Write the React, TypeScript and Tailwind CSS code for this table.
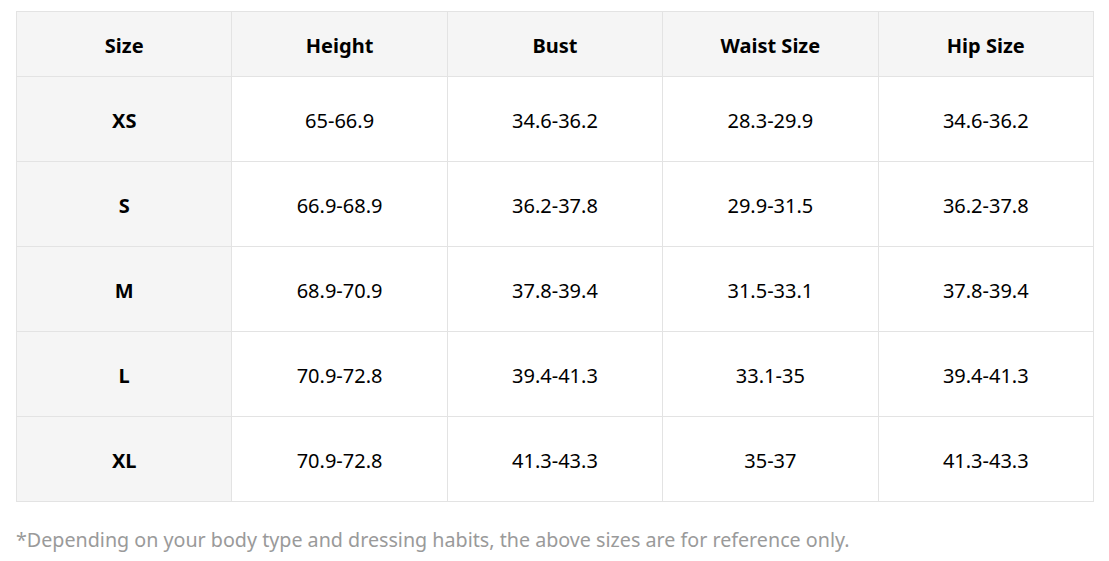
import React from "react";

const headers = ["Size", "Height", "Bust", "Waist Size", "Hip Size"];
const rows = [
  ["XS", "65-66.9", "34.6-36.2", "28.3-29.9", "34.6-36.2"],
  ["S", "66.9-68.9", "36.2-37.8", "29.9-31.5", "36.2-37.8"],
  ["M", "68.9-70.9", "37.8-39.4", "31.5-33.1", "37.8-39.4"],
  ["L", "70.9-72.8", "39.4-41.3", "33.1-35", "39.4-41.3"],
  ["XL", "70.9-72.8", "41.3-43.3", "35-37", "41.3-43.3"],
];

export default function App() {
  return (
    <div
      className="w-[1109px] h-[561px] bg-white pl-[16px] pt-[11px]"
      style={{ fontFamily: '"Noto Sans", "Open Sans", sans-serif' }}
    >
      <table className="w-[1078px] table-fixed border-collapse border border-[#e3e3e3] text-[20px] text-black">
        <thead>
          <tr className="h-[65px] bg-[#f5f5f5]">
            {headers.map((h) => (
              <th key={h} className="border border-[#e3e3e3] text-center font-bold p-0 pt-[3px] leading-[26px]">
                {h}
              </th>
            ))}
          </tr>
        </thead>
        <tbody>
          {rows.map((r) => (
            <tr key={r[0]} className="h-[85px]">
              {r.map((c, i) => (
                <td
                  key={i}
                  className={
                    "border border-[#e3e3e3] text-center p-0 pt-[4px] leading-[26px] " +
                    (i === 0 ? "bg-[#f5f5f5] font-bold" : "bg-white")
                  }
                >
                  {c}
                </td>
              ))}
            </tr>
          ))}
        </tbody>
      </table>
      <p className="mt-[25px] text-[19.7px] text-[#9a9a9a] leading-[26px]">
        *Depending on your body type and dressing habits, the above sizes are for reference only.
      </p>
    </div>
  );
}
